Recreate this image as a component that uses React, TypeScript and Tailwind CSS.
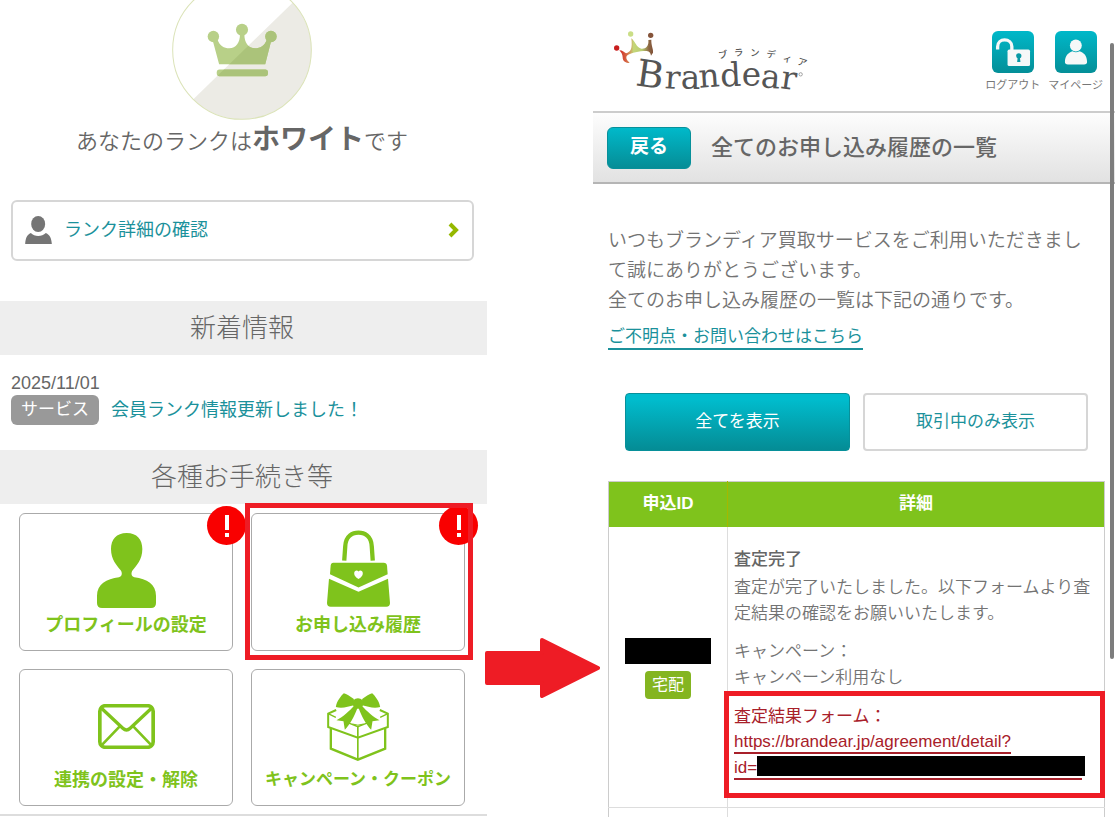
import type { ReactNode } from "react";

const CrownBadge = () => (
  <svg className="w-[140px] h-[140px]" viewBox="0 0 416 416" aria-hidden="true">
    <defs>
      <clipPath id="rank-circle">
        <circle cx="208" cy="208" r="206" />
      </clipPath>
      <clipPath id="rank-shade">
        <path d="M426 2 L0 416 H426 Z" />
      </clipPath>
      <g id="rank-crown">
        <circle cx="18" cy="38" r="17" />
        <circle cx="103" cy="18" r="18" />
        <circle cx="189" cy="38" r="17" />
        <path d="M30 46 C36 66 50 73 65 73 C86 73 97 55 97 32 H110 C110 55 121 73 142 73 C157 73 171 66 177 46 L190 50 L172 120 H35 L16 50 Z" />
        <rect x="28" y="136" width="152" height="20" rx="8" />
      </g>
    </defs>
    <g clipPath="url(#rank-circle)">
      <rect width="416" height="416" fill="#fff" />
      <path d="M426 2 L0 416 H426 Z" fill="#ecebe5" />
    </g>
    <use href="#rank-crown" x="105" y="130" fill="#b8d088" />
    <g clipPath="url(#rank-shade)">
      <use href="#rank-crown" x="105" y="130" fill="#abc37a" />
    </g>
    <circle cx="208" cy="208" r="206" fill="none" stroke="#dbe3b8" strokeWidth="3" />
  </svg>
);

const PersonIcon = () => (
  <svg className="w-[59px] h-[75px]" viewBox="0 0 177 225" fill="#7fc31c" aria-hidden="true">
    <path d="M89 0 C120 0 136 20 136 48 C136 80 118 98 107 112 C101 120 103 131 112 133 C150 137 177 155 177 188 V210 Q177 225 162 225 H15 Q0 225 0 210 V188 C0 155 28 137 66 133 C75 131 77 120 71 112 C60 98 42 80 42 48 C42 20 58 0 89 0 Z" />
  </svg>
);

const BagIcon = () => (
  <svg className="w-[63px] h-[77px]" viewBox="0 0 190 230" fill="#7fc31c" aria-hidden="true">
    <path
      d="M52 91 L55 48 C57 16 78 7 95 7 C112 7 133 16 135 48 L138 91"
      fill="none"
      stroke="#7fc31c"
      strokeWidth="13"
    />
    <path d="M19 98 H171 Q180 98 181 107 L183 132 L95 172 L9 132 L11 107 Q12 98 19 98 Z" />
    <path d="M6 146 L95 185 L184 146 L190 219 Q190 230 179 230 H11 Q0 230 0 219 Z" />
    <path
      d="M95 147 C86 141 82 136 82 129 C82 121 91 119 95 124 C99 119 108 121 108 129 C108 136 104 141 95 147 Z"
      fill="#fff"
    />
  </svg>
);

const MailIcon = () => (
  <svg
    className="w-[57px] h-[45px]"
    viewBox="0 0 170 135"
    fill="none"
    stroke="#7fc31c"
    strokeWidth="10"
    aria-hidden="true"
  >
    <rect x="5" y="5" width="160" height="125" rx="17" strokeWidth="11" />
    <path d="M10 13 L74 73 Q85 83 96 73 L160 13" />
    <path d="M10 124 L64 68 M160 124 L106 68" strokeWidth="8" />
  </svg>
);

const GiftIcon = () => (
  <svg className="w-[62px] h-[68px]" viewBox="0 0 185 204" aria-hidden="true">
    <g fill="none" stroke="#7fc31c" strokeWidth="6">
      <path d="M27 51 L3 62 V102 L92 134 L182 102 V62 L158 51" />
      <path d="M3 62 L26 73 M182 62 L159 73 M60 88 L92 101 L125 88" strokeWidth="4" />
      <path d="M11 106 V167 L92 200 L174 167 V106" strokeWidth="7" />
      <path d="M92 101 V200" strokeWidth="5" />
      <path d="M76 93 Q92 100 109 93" strokeWidth="3" />
    </g>
    <g fill="#7fc31c">
      <path d="M80 18 C68 10 58 3 50 1 C42 8 28 26 26 42 C42 47 64 42 80 37 Z" />
      <path d="M105 18 C117 10 127 3 135 1 C143 8 157 26 159 42 C143 47 121 42 105 37 Z" />
      <path d="M80 40 C68 52 48 72 28 82 L49 85 L53 110 C66 98 82 70 91 44 Z" />
      <path d="M105 40 C117 52 137 72 157 82 L136 85 L132 110 C119 98 103 70 94 44 Z" />
      <path d="M78 22 Q92 10 107 22 Q111 34 104 44 Q92 50 81 44 Q74 34 78 22 Z" />
    </g>
  </svg>
);

const UserSmallIcon = () => (
  <svg className="w-[27px] h-[28px]" viewBox="0 0 80 84" fill="#757575" aria-hidden="true">
    <ellipse cx="39" cy="24" rx="21" ry="24" />
    <path d="M0 84 C1 68 5 56 17 51 C28 63 50 63 62 51 C74 56 79 68 80 84 Z" />
  </svg>
);

const Logo = () => (
  <svg className="w-[202px] h-[68px]" viewBox="60 84 606 204" role="img" aria-label="Brandear">
    <defs>
      <linearGradient id="logo-crown" x1="90" y1="0" x2="192" y2="0" gradientUnits="userSpaceOnUse">
        <stop offset="0" stopColor="#d22a24" />
        <stop offset="0.22" stopColor="#d5714a" />
        <stop offset="0.4" stopColor="#c4d678" />
        <stop offset="0.65" stopColor="#b9cc73" />
        <stop offset="0.85" stopColor="#8d6743" />
        <stop offset="1" stopColor="#7c4a35" />
      </linearGradient>
    </defs>
    <circle cx="80" cy="144" r="8" fill="#c81e1e" />
    <circle cx="122" cy="102" r="8" fill="#cade86" />
    <circle cx="182" cy="106" r="8" fill="#85543a" />
    <path
      d="M88 151 C98 151 104 158 108 160 C122 156 128 146 124 115 C134 122 140 144 154 146 C168 147 177 138 175 120 L184 119 C183 136 191 148 189 158 L183 167 C181 152 172 151 152 154 C132 157 110 163 109 171 C108 179 114 184 119 188 C107 191 98 183 98 172 C98 163 93 156 88 151 Z"
      fill="url(#logo-crown)"
    />
    <text
      className="font-['DejaVu_Serif',serif]"
      fontSize="98"
      fill="#555"
      x="134 223 272 328 392 455 511 569"
      y="256 265 266 263 260 259 261 264"
      rotate="8 3 0 -4 -3 0 5 8"
    >
      <tspan fontSize="112">B</tspan>randear
    </text>
    <text
      className="font-['Noto_Sans_CJK_JP',sans-serif] font-medium"
      fontSize="28"
      fill="#555"
      x="386 433 481 529 577 620"
      y="176 169 168 172 183 192"
      rotate="-8 -4 0 5 10 18"
    >
      ブランディア
    </text>
    <circle cx="632" cy="223" r="5" fill="none" stroke="#777" strokeWidth="2" />
  </svg>
);

const UnlockIcon = () => (
  <svg className="w-[42px] h-[42px]" viewBox="0 0 127 127" aria-hidden="true">
    <path d="M17 56 V48 C17 34 27 27 38 27 C50 27 60 35 60 47 V58" fill="none" stroke="#f6f8f8" strokeWidth="10" />
    <rect x="47" y="56" width="68" height="50" rx="5" fill="#f6f8f8" />
    <circle cx="81" cy="75" r="8" fill="#0899a5" />
    <path d="M78 77 H84 L86 94 H76 Z" fill="#0899a5" />
  </svg>
);

const MyPageIcon = () => (
  <svg className="w-[42px] h-[42px]" viewBox="0 0 127 127" fill="#f6f8f8" aria-hidden="true">
    <circle cx="63" cy="44" r="18" />
    <path d="M30 94 C30 74 42 64 53 61 Q63 67 74 61 C86 64 97 74 97 94 Q97 101 88 101 H39 Q30 101 30 94 Z" />
  </svg>
);

const SectionTitle = ({ children }: { children: ReactNode }) => (
  <h2 className="h-[54px] bg-[#eee] pr-[3px] text-center text-[26px] leading-[54px] font-light">{children}</h2>
);

const tiles = [
  { label: "プロフィールの設定", icon: <PersonIcon />, alert: true, box: "h-[138px]", gap: "mb-[5px]", size: "text-[18px]" },
  { label: "お申し込み履歴", icon: <BagIcon />, alert: true, marked: true, box: "h-[138px]", gap: "mb-[6px]", size: "text-[18px]" },
  { label: "連携の設定・解除", icon: <MailIcon />, box: "h-[137px]", gap: "mb-[19px]", size: "text-[18px]" },
  { label: "キャンペーン・クーポン", icon: <GiftIcon />, box: "h-[137px]", gap: "mb-[7px]", size: "text-[17px]" },
];

const RankPanel = () => (
  <section className="overflow-hidden">
    <div className="-mt-5 flex justify-center pr-[3px]">
      <CrownBadge />
    </div>
    <p className="pr-[3px] text-center text-[22px] leading-[40px] font-[350]">
      あなたのランクは<strong className="text-[28px] font-bold">ホワイト</strong>です
    </p>
    <a
      href="#rank"
      className="mt-[38px] mr-[13px] ml-[11px] flex h-[61px] items-center rounded-md border-2 border-[#d6d6d6] px-3 pb-[2px] text-[#1b919b]"
    >
      <UserSmallIcon />
      <span className="ml-3 text-[18px] leading-6">ランク詳細の確認</span>
      <svg className="ml-auto h-4 w-3" viewBox="0 0 12 16" fill="none" stroke="#95b800" strokeWidth="4" aria-hidden="true">
        <path d="M2 2 L8 8 L2 14" />
      </svg>
    </a>

    <div className="mt-10">
      <SectionTitle>新着情報</SectionTitle>
    </div>
    <div className="mt-4 px-[11px]">
      <time className="block text-[18px] leading-6">2025/11/01</time>
      <div className="flex items-center gap-3">
        <span className="rounded-md bg-[#999] px-[10px] text-[17px] leading-[30px] text-white">サービス</span>
        <a href="#news" className="text-[18px] leading-[30px] text-[#1b919b]">
          会員ランク情報更新しました！
        </a>
      </div>
    </div>

    <div className="mt-[25px]">
      <SectionTitle>各種お手続き等</SectionTitle>
    </div>
    <nav className="mt-[9px] grid grid-cols-2 gap-[18px] pr-[22px] pl-[19px]">
      {tiles.map((tile) => (
        <div key={tile.label} className="relative">
          <a
            href="#menu"
            className={`flex flex-col items-center justify-end rounded-md border border-[#aaa] pb-[13px] ${tile.box}`}
          >
            <span className={tile.gap}>{tile.icon}</span>
            <span className={`leading-6 font-bold text-[#7fc31c] ${tile.size}`}>{tile.label}</span>
          </a>
          {tile.alert && (
            <span className="absolute -top-[7px] -right-[13px] flex h-[39px] w-[39px] items-center justify-center rounded-full bg-[#f90000]">
              <svg className="h-[22px] w-[6px]" viewBox="0 0 6 22" fill="#fff" aria-hidden="true">
                <path d="M1 0 H5 V15 H1 Z M1 18 H5 V22 H1 Z" />
              </svg>
            </span>
          )}
          {tile.marked && (
            <div className="pointer-events-none absolute -top-[10px] -right-2 -bottom-[9px] -left-[6px] border-5 border-[#ee1c25]" />
          )}
        </div>
      ))}
    </nav>
    <div className="mt-2 h-1 border-t-2 border-[#ddd]" />
  </section>
);

const HistoryPanel = () => (
  <section className="relative">
    <header className="flex h-[111px] items-start justify-between pt-[28px] pr-3 pl-[17px]">
      <Logo />
      <nav className="flex gap-2 pt-[3px] text-[11px] leading-4 text-[#777]">
        <a href="#logout" className="flex flex-col items-center gap-1">
          <span className="rounded-md bg-linear-to-b from-[#00b8c9] to-[#048f98]">
            <UnlockIcon />
          </span>
          ログアウト
        </a>
        <a href="#mypage" className="flex flex-col items-center gap-1">
          <span className="rounded-md bg-linear-to-b from-[#00b8c9] to-[#048f98]">
            <MyPageIcon />
          </span>
          マイページ
        </a>
      </nav>
    </header>

    <div className="flex h-[73px] items-center gap-5 border-t-2 border-b-2 border-t-[#ccc] border-b-[#b5b5b5] bg-linear-to-b from-[#fdfdfd] to-[#e2e2e2] px-[14px]">
      <button
        type="button"
        className="h-[42px] w-[84px] rounded-md border border-[#07909a] bg-linear-to-b from-[#00b9ca] to-[#058d96] text-[19px] font-bold text-white"
      >
        戻る
      </button>
      <h1 className="text-[22px] leading-8 font-medium">全てのお申し込み履歴の一覧</h1>
    </div>

    <div className="pt-[42px] pr-[10px] pl-[15px]">
      <p className="pr-[10px] text-[19px] leading-[30px] font-[350] text-[#737373]">
        いつもブランディア買取サービスをご利用いただきまして誠にありがとうございます。
        <br />
        全てのお申し込み履歴の一覧は下記の通りです。
      </p>
      <a
        href="#contact"
        className="mt-[10px] inline-block border-b-2 border-[#1b919b] text-[17px] leading-[22px] text-[#1b919b]"
      >
        ご不明点・お問い合わせはこちら
      </a>

      <div className="mt-[43px] grid grid-cols-2 gap-[13px] px-[17px]">
        <button
          type="button"
          className="h-[58px] rounded border border-[#07909a] bg-linear-to-b from-[#00bccd] from-10% to-[#048c95] text-[17px] text-white"
        >
          全てを表示
        </button>
        <button type="button" className="h-[58px] rounded border-2 border-[#d6d6d6] bg-white text-[17px] text-[#1b919b]">
          取引中のみ表示
        </button>
      </div>

      <table className="mt-[30px] w-full table-fixed border-collapse border border-b-0 border-[#ccc] text-[17px] leading-[26px]">
        <thead>
          <tr className="h-[45px] bg-[#7fc31c] text-white">
            <th className="w-[119px] border-r border-[#a5b800] font-bold">申込ID</th>
            <th className="font-bold">詳細</th>
          </tr>
        </thead>
        <tbody>
          <tr className="border-b border-[#ddd]">
            <td className="border-r border-[#ddd] px-[14px] pt-1 text-center align-middle">
              <div className="mx-auto h-[26px] w-[86px] bg-black" />
              <span className="mt-[7px] inline-block rounded bg-[#84b521] px-[7px] text-[16px] leading-[28px] text-white">
                宅配
              </span>
            </td>
            <td className="pt-5 pr-[10px] pb-[27px] pl-[6px] align-top">
              <p className="font-medium">査定完了</p>
              <p className="mt-[2px] -mr-1 font-[350] text-[#737373]">
                査定が完了いたしました。以下フォームより査定結果の確認をお願いいたします。
              </p>
              <p className="mt-3 font-[350] text-[#737373]">
                キャンペーン：
                <br />
                キャンペーン利用なし
              </p>
              <div className="relative mt-[13px] text-[#a8202a]">
                <p>査定結果フォーム：</p>
                <a href="#detail" className="block leading-[24px]">
                  <span className="block h-6 w-fit border-b-2 border-[#a8202a]">
                    https://brandear.jp/agreement/detail?
                  </span>
                  <span className="mt-[2px] mr-3 flex h-6 border-b-2 border-[#a8202a]">
                    id=
                    <span className="-mr-[3px] h-5 flex-1 bg-black" />
                  </span>
                </a>
                <div className="pointer-events-none absolute -top-[13px] -right-[11px] -bottom-[18px] -left-[10px] border-5 border-[#ee1c25]" />
              </div>
            </td>
          </tr>
          <tr>
            <td className="h-[10px] border-r border-[#ddd]" />
            <td />
          </tr>
        </tbody>
      </table>
    </div>
    <div className="absolute top-[43px] right-px h-[616px] w-1 rounded-full bg-[#7d7d7d]" />
  </section>
);

export default function App() {
  return (
    <main className="grid min-h-screen grid-cols-[487fr_106fr_522fr] overflow-hidden bg-white font-['Liberation_Sans','Noto_Sans_CJK_JP',sans-serif] text-[#666]">
      <RankPanel />
      <div className="relative">
        <svg
          className="absolute top-[638px] -left-[2px] z-10 h-[60px] w-[115px]"
          viewBox="0 0 115 60"
          fill="#ee1c25"
          stroke="#ee1c25"
          strokeWidth="4"
          strokeLinejoin="round"
          aria-hidden="true"
        >
          <path d="M2 15 H57 V2 L113 30 L57 58 V45 H2 Z" />
        </svg>
      </div>
      <HistoryPanel />
    </main>
  );
}
